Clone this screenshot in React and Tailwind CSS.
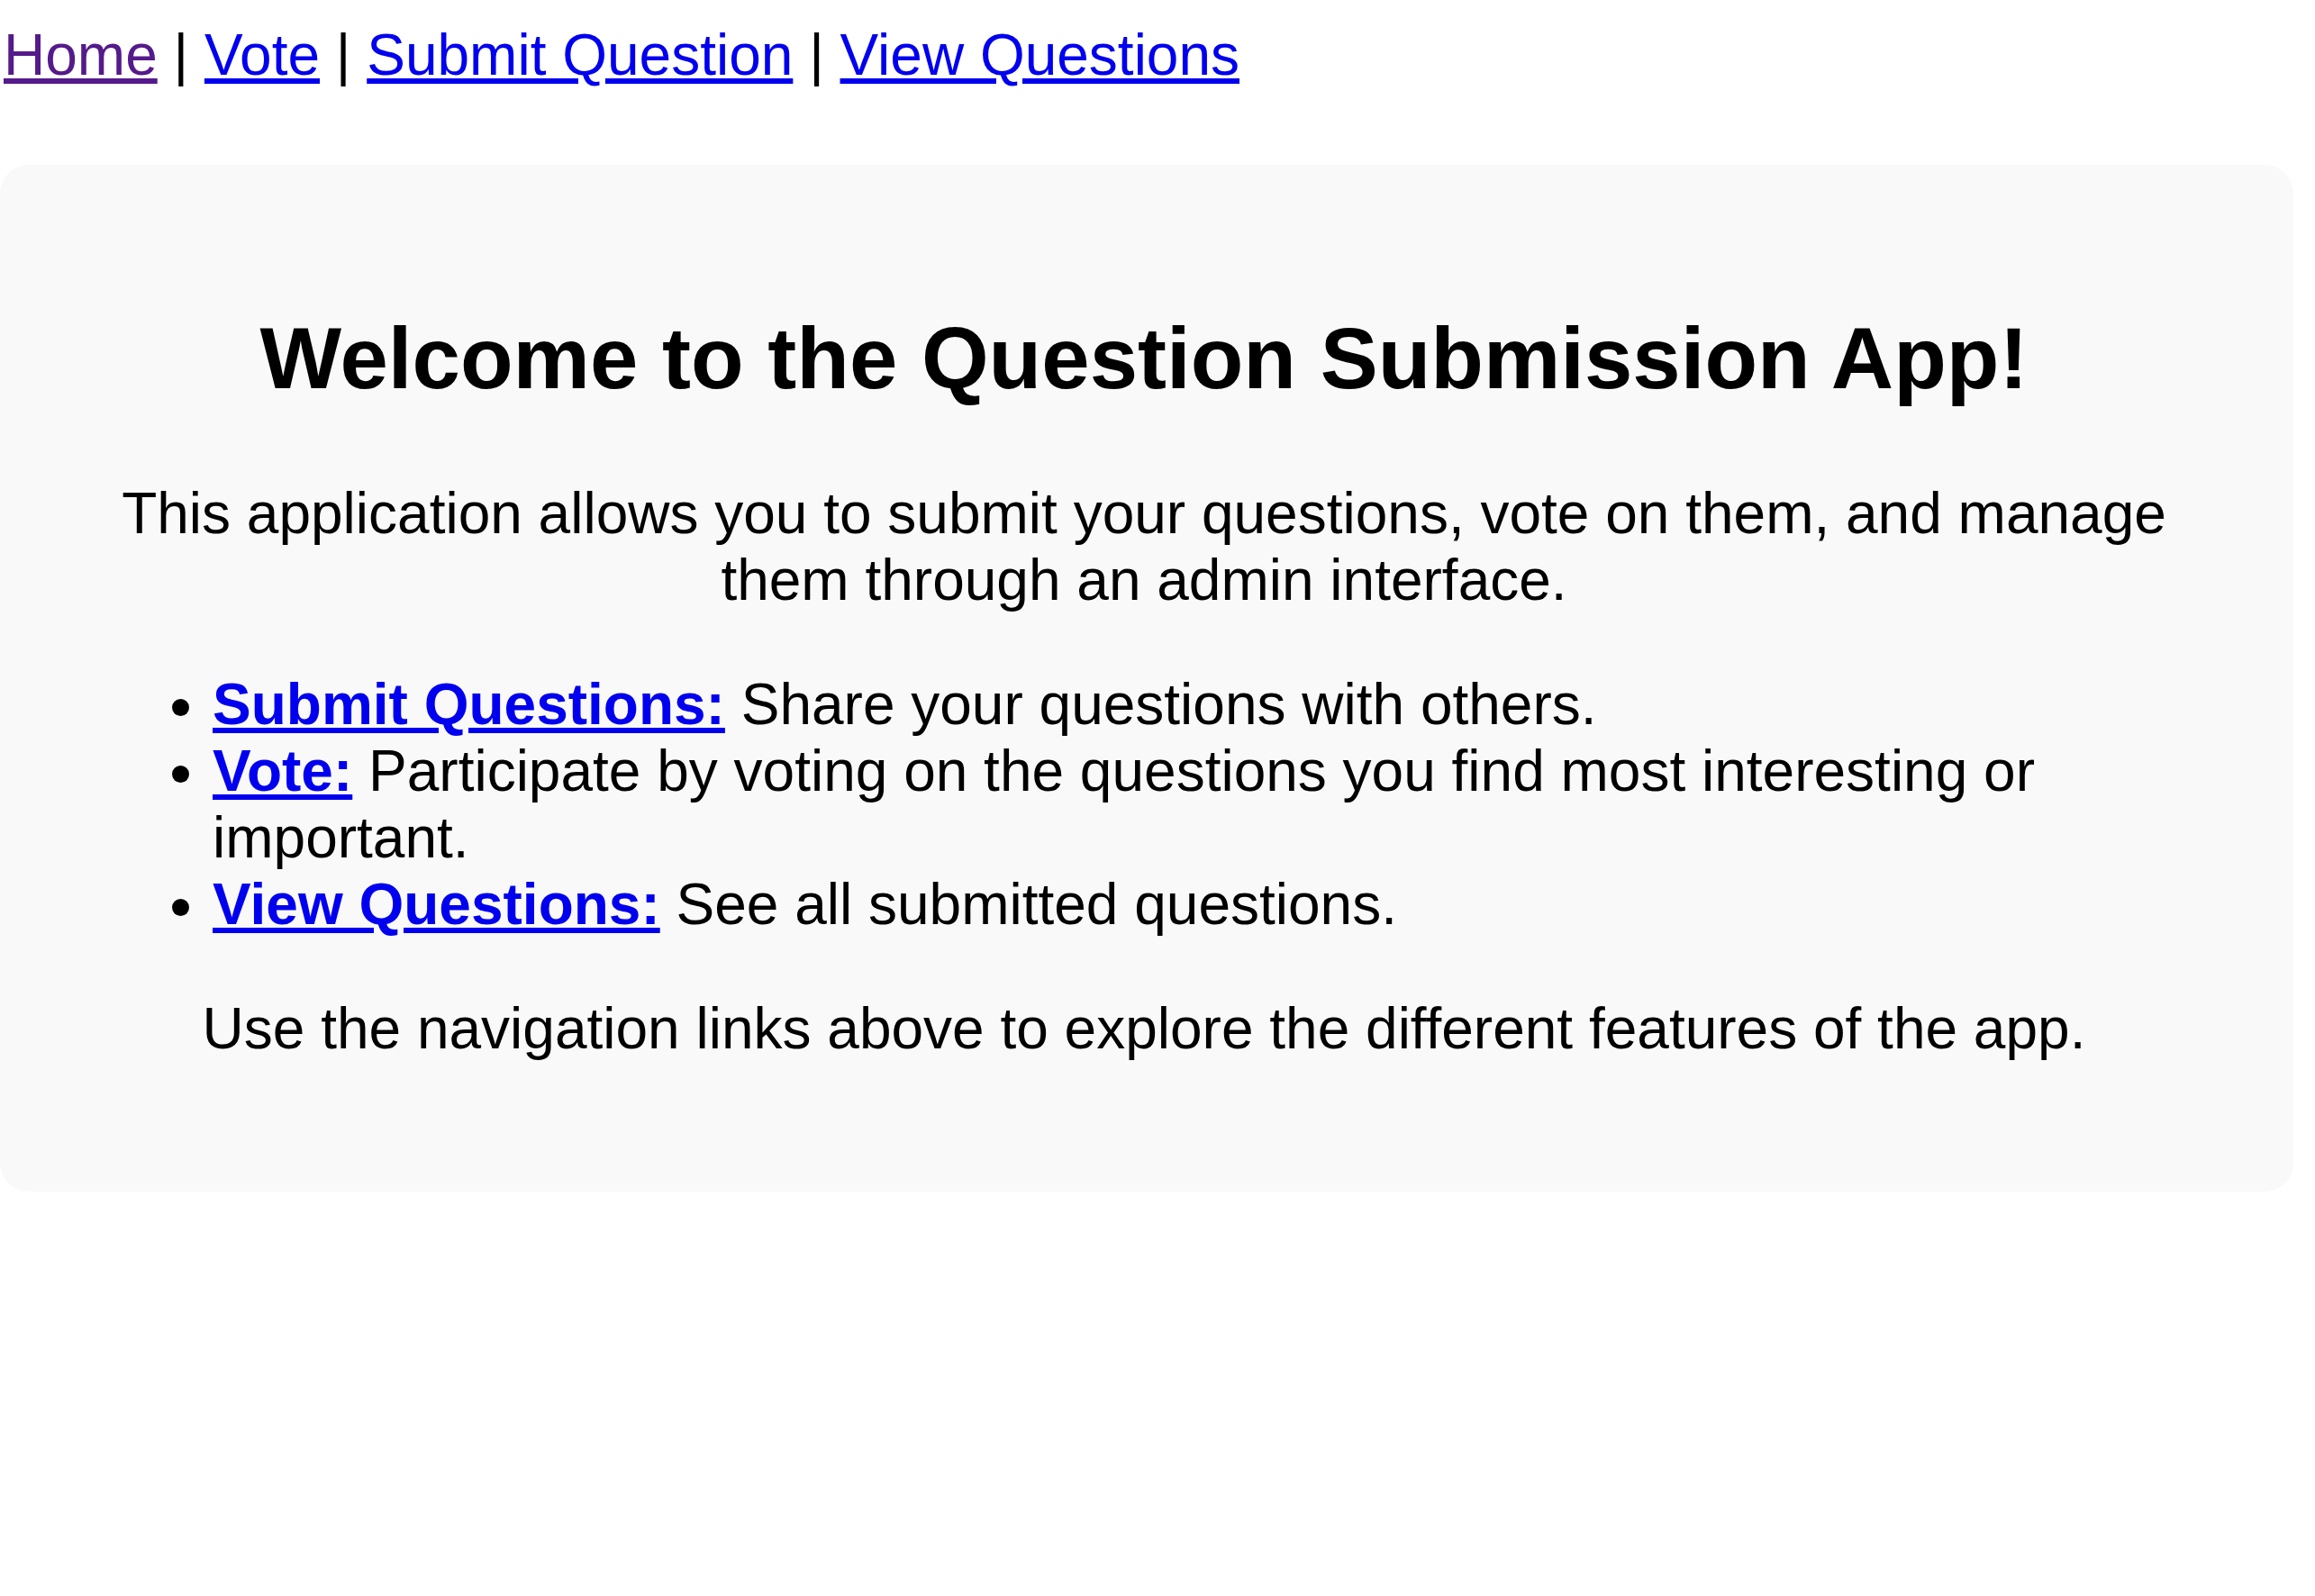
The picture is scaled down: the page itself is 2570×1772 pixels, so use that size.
import React from 'react';

const App = () => {
  return (
    <div className="min-h-screen bg-white text-black font-['Liberation_Sans',Arial,sans-serif] text-[64px] leading-[normal]">
      <nav className="pt-[24px] pl-[4px]">
        <a href="#" className="text-[#551a8b] underline">Home</a>
        {' | '}
        <a href="#" className="text-[#0000ee] underline">Vote</a>
        {' | '}
        <a href="#" className="text-[#0000ee] underline">Submit Question</a>
        {' | '}
        <a href="#" className="text-[#0000ee] underline">View Questions</a>
      </nav>

      <div className="mt-[85px] mr-[24px] bg-[#f9f9f9] rounded-[32px] pl-[76px] pr-[82px] py-[80px] text-center">
        <h1 className="text-[96px] font-bold leading-[normal] my-[80px]">
          Welcome to the Question Submission App!
        </h1>
        <p>
          This application allows you to submit your questions, vote on them, and manage them through an admin interface.
        </p>
        <ul className="list-disc pl-[160px] my-[64px] text-left">
          <li>
            <a href="#" className="text-[#0000ee] underline font-bold">Submit Questions:</a> Share your questions with others.
          </li>
          <li>
            <a href="#" className="text-[#0000ee] underline font-bold">Vote:</a> Participate by voting on the questions you find most interesting or important.
          </li>
          <li>
            <a href="#" className="text-[#0000ee] underline font-bold">View Questions:</a> See all submitted questions.
          </li>
        </ul>
        <p className="mb-[64px]">
          Use the navigation links above to explore the different features of the app.
        </p>
      </div>
    </div>
  );
};

export default App;
